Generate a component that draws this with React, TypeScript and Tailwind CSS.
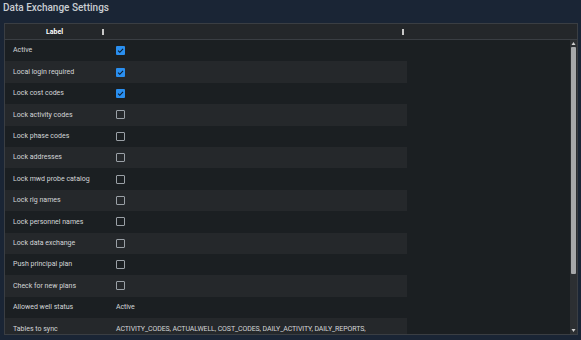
const rows: { label: string; checked?: boolean; text?: string }[] = [
  { label: 'Active', checked: true },
  { label: 'Local login required', checked: true },
  { label: 'Lock cost codes', checked: true },
  { label: 'Lock activity codes', checked: false },
  { label: 'Lock phase codes', checked: false },
  { label: 'Lock addresses', checked: false },
  { label: 'Lock mwd probe catalog', checked: false },
  { label: 'Lock rig names', checked: false },
  { label: 'Lock personnel names', checked: false },
  { label: 'Lock data exchange', checked: false },
  { label: 'Push principal plan', checked: false },
  { label: 'Check for new plans', checked: false },
  { label: 'Allowed well status', text: 'Active' },
  { label: 'Tables to sync', text: 'ACTIVITY_CODES, ACTUALWELL, COST_CODES, DAILY_ACTIVITY, DAILY_REPORTS,' },
]

function Checkbox({ checked }: { checked: boolean }) {
  if (checked) {
    return (
      <div className="w-[9px] h-[9px] rounded-[1px] bg-[#2a8ff0] flex items-center justify-center">
        <svg width="7" height="7" viewBox="0 0 10 10">
          <path d="M1.5 5.2 L4 7.6 L8.6 2.6" stroke="#0d1b2a" strokeWidth="1.6" fill="none" />
        </svg>
      </div>
    )
  }
  return <div className="w-[9px] h-[9px] rounded-[1px] border-[1.5px] border-[#9aa0a6]" />
}

export default function App() {
  return (
    <div
      className="w-[581px] h-[340px] bg-[#1a2535] overflow-hidden text-[#d4d6d8]"
      style={{ fontFamily: 'Roboto, "Noto Sans", sans-serif' }}
    >
      <div className="h-[23px] pl-[3px] text-[10px] leading-[15px] font-medium text-[#c9cdd2]">
        Data Exchange Settings
      </div>
      <div className="ml-[4px] w-[574px] h-[312px] border border-[#3a3e43] bg-[#1b1f22] flex flex-col">
        <div className="h-[16px] shrink-0 flex bg-[#24272a] border-b border-[#3a3e43] text-[7px] font-bold text-white">
          <div className="w-[100px] flex items-center">
            <span className="flex-1 text-center pl-[2px] pt-[1px]">Label</span>
            <span className="w-[2px] h-[6px] bg-[#c8c8c8] mr-[1px]" />
          </div>
          <div className="w-[300px] flex items-center justify-end">
            <span className="w-[2px] h-[6px] bg-[#c8c8c8] mr-[1px]" />
          </div>
        </div>
        <div className="flex-1 flex min-h-0">
          <div className="flex-1 overflow-hidden">
            {rows.map((r, i) => (
              <div
                key={r.label}
                className={`w-[402px] h-[21.4px] flex items-center text-[7px] ${i % 2 === 1 ? 'bg-[#25282b]' : ''}`}
              >
                <div className="w-[111px] pl-[8px] whitespace-nowrap">{r.label}</div>
                <div className="flex-1 whitespace-nowrap tracking-[-0.1px]">
                  {r.text !== undefined ? r.text : <Checkbox checked={!!r.checked} />}
                </div>
              </div>
            ))}
          </div>
          <div className="w-[7px] bg-[#2c2f32] flex flex-col items-center">
            <svg width="5" height="6" viewBox="0 0 5 6" className="mt-[1px]">
              <path d="M2.5 1 L4.5 4 L0.5 4 Z" fill="#cfcfcf" />
            </svg>
            <div className="w-[5px] h-[227px] bg-[#a6a8aa] rounded-[1px]" />
            <div className="flex-1" />
            <svg width="5" height="6" viewBox="0 0 5 6" className="mb-[1px]">
              <path d="M0.5 2 L4.5 2 L2.5 5 Z" fill="#cfcfcf" />
            </svg>
          </div>
        </div>
      </div>
    </div>
  )
}
